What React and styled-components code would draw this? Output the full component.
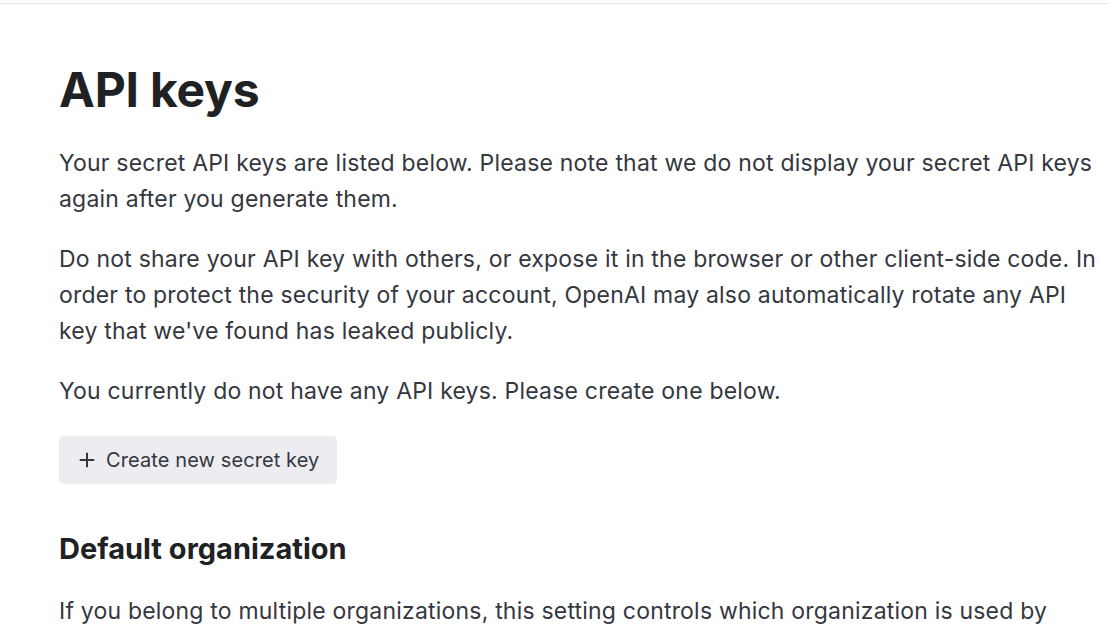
import React from "react";
import styled, { createGlobalStyle } from "styled-components";

const Global = createGlobalStyle`
  html, body { margin: 0; padding: 0; background: #fff; }
  body { font-family: "Inter", "Noto Sans", sans-serif; color: #353740; -webkit-font-smoothing: antialiased; }
`;

const TopBar = styled.div`
  height: 3px;
  border-bottom: 1px solid #e3e3e6;
`;

const Main = styled.main`
  padding: 57px 0 0 59px;
  width: 1040px;
`;

const Title = styled.h1`
  margin: 0 0 26px;
  font-size: 48px;
  line-height: 58px;
  font-weight: 700;
  color: #202123;
  letter-spacing: -0.2px;
`;

const Para = styled.p`
  margin: 0 0 24px;
  font-size: 23px;
  line-height: 36px;
  color: #353740;
  letter-spacing: 0.2px;
`;

const Button = styled.button`
  display: inline-flex;
  align-items: center;
  gap: 10px;
  height: 48px;
  padding: 0 18px 0 19px;
  margin-top: 3px;
  border: none;
  border-radius: 5px;
  background: #ececf1;
  color: #353740;
  font-family: inherit;
  font-size: 20px;
  letter-spacing: 0.1px;
  cursor: pointer;
`;

const SubTitle = styled.h2`
  margin: 45px 0 24px;
  font-size: 29px;
  line-height: 40px;
  font-weight: 700;
  color: #202123;
`;

function Plus() {
  return (
    <svg width="18" height="18" viewBox="0 0 18 18" fill="none" stroke="#353740" strokeWidth="2" strokeLinecap="round">
      <path d="M9 2.5v13M2.5 9h13" />
    </svg>
  );
}

export default function App() {
  return (
    <>
      <Global />
      <TopBar />
      <Main>
        <Title>API keys</Title>
        <Para>
          Your secret API keys are listed below. Please note that we do not display your secret API keys again after you generate them.
        </Para>
        <Para>
          Do not share your API key with others, or expose it in the browser or other client-side code. In order to protect the security of your account, OpenAI may also automatically rotate any API key that we've found has leaked publicly.
        </Para>
        <Para>You currently do not have any API keys. Please create one below.</Para>
        <Button>
          <Plus />
          Create new secret key
        </Button>
        <SubTitle>Default organization</SubTitle>
        <Para>
          If you belong to multiple organizations, this setting controls which organization is used by default when making requests with the API keys above.
        </Para>
      </Main>
    </>
  );
}
